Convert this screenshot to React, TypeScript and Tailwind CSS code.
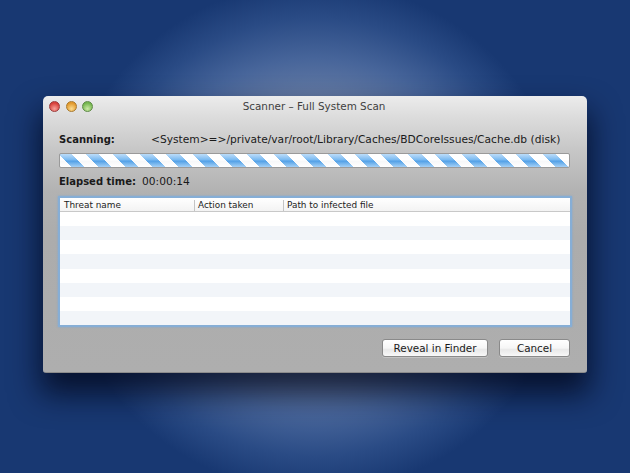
export default function App() {
  const rows = [0, 1, 2, 3, 4, 5, 6, 7];
  const btn = "h-[18px] rounded-[3px] border border-[#8a8a8a] bg-[linear-gradient(#ffffff,#f6f6f6_50%,#e9e9e9_60%,#f8f8f8)] text-[10.4px] leading-none text-[#1a1a1a] shadow-[0_1px_0_rgba(255,255,255,0.25)]";
  return (
    <div className="relative w-[630px] h-[473px] overflow-hidden pt-[96px] pl-[43px] bg-[radial-gradient(circle_255px_at_315px_237px,#a3b0ca_0%,#8496b8_28%,#6a7fa6_52%,#47659a_70%,#2a4b85_86%,#183872_100%)] font-['DejaVu_Sans',sans-serif]">
      <div className="w-[544px] h-[277px] rounded-t-[5px] rounded-b-[3px] border-b border-[#8c8c8c] bg-[linear-gradient(#ececec_0px,#dcdcdc_21px,#c6c6c6_55px,#b2b2b2_95px,#acacac_140px,#aeaeae_100%)] shadow-[0_18px_30px_3px_rgba(3,8,28,0.78)] flex flex-col">
        <div className="h-[21px] flex items-center relative shrink-0">
          <div className="flex gap-[5.5px] pl-[6px]">
            <span className="w-[11px] h-[11px] rounded-full border border-[#9c3b3b] bg-[radial-gradient(circle_at_50%_75%,#f6a29a,#d8403a_70%)]" />
            <span className="w-[11px] h-[11px] rounded-full border border-[#a9792c] bg-[radial-gradient(circle_at_50%_75%,#fbdc90,#e2992c_70%)]" />
            <span className="w-[11px] h-[11px] rounded-full border border-[#5e8a45] bg-[radial-gradient(circle_at_50%_75%,#cdeaa6,#74b64e_70%)]" />
          </div>
          <div className="flex-1 text-center text-[10.4px] leading-none text-[#3f3f3f] pr-[52px] pb-[1px]">Scanner – Full System Scan</div>
        </div>
        <div className="flex items-center h-[17px] mt-[14px] pl-[16px] text-[10.66px] text-[#1a1a1a] whitespace-nowrap">
          <span className="w-[92px] font-bold text-[10px]">Scanning:</span>
          <span>&lt;System&gt;=&gt;/private/var/root/Library/Caches/BDCoreIssues/Cache.db (disk)</span>
        </div>
        <div className="ml-[16px] mt-[5px] w-[511px] h-[15px] border border-[#9a9a9a] rounded-[2px] bg-[linear-gradient(rgba(255,255,255,0.1),rgba(255,255,255,0)_45%,rgba(40,60,90,0.04)_55%,rgba(255,255,255,0.05)),repeating-linear-gradient(45deg,#ffffff_0px,#ffffff_8.1px,transparent_8.1px,transparent_17.6px,#ffffff_17.6px,#ffffff_19px),linear-gradient(#b4d8f8,#78b9f1_45%,#55a5ec_55%,#a0cef6)]" />
        <div className="flex items-center h-[17px] mt-[5px] pl-[16px] text-[10.66px] text-[#1a1a1a] whitespace-nowrap">
          <span className="w-[83px] font-bold text-[10px]">Elapsed time:</span>
          <span>00:00:14</span>
        </div>
        <div className="ml-[15px] mt-[6px] w-[514px] h-[131px] border-2 border-[#86aed6] bg-white flex flex-col shadow-[0_0_2px_#7fa8d2]">
          <div className="flex h-[14px] items-center pt-[1px] border-b border-[#c8c8c8] bg-[linear-gradient(#ffffff,#f3f3f3)] text-[8.9px] text-[#222] shrink-0 whitespace-nowrap">
            <span className="w-[135px] pl-[4px] border-r border-[#c4c4c4] leading-[11px]">Threat name</span>
            <span className="w-[89px] pl-[3px] border-r border-[#c4c4c4] leading-[11px]">Action taken</span>
            <span className="pl-[3px] leading-[11px]">Path to infected file</span>
          </div>
          <div className="flex-1 flex flex-col">
            {rows.map((r) => (
              <div key={r} className={r % 2 === 0 ? "flex-1 bg-white" : "flex-1 bg-[#f2f5f9]"} />
            ))}
          </div>
        </div>
        <div className="flex justify-end gap-[11px] pr-[17px] mt-[12px]">
          <button className={btn + " w-[106px]"}>Reveal in Finder</button>
          <button className={btn + " w-[71px]"}>Cancel</button>
        </div>
      </div>
    </div>
  );
}
